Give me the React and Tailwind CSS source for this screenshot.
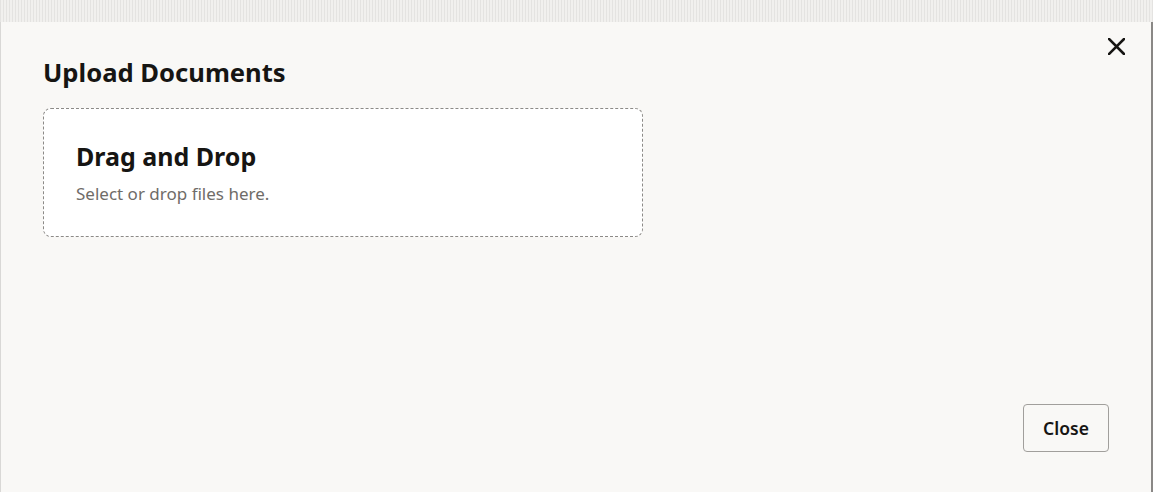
const Backdrop = () => (
  <div className="h-[22px] w-full bg-[#ebeae8] bg-[repeating-linear-gradient(90deg,#e4e3e1_0px,#e4e3e1_1px,#f1f0ee_1px,#f1f0ee_3px)]" />
);

const App = () => {
  return (
    <div className="flex h-[492px] w-[1153px] flex-col overflow-hidden bg-[#ebeae8] font-['Noto_Sans',sans-serif]">
      <Backdrop />
      <div className="relative flex flex-1 flex-col border-l border-r-2 border-l-[#d9d8d6] border-r-[#8a8886] bg-[#f9f8f6] pl-[42px] pr-[42px]">
        <button
          className="absolute right-[26px] top-[16px] flex h-[17px] w-[17px] items-center justify-center text-[#161513]"
          aria-label="Close dialog"
        >
          <svg viewBox="0 0 17 17" className="h-[17px] w-[17px]" fill="none" stroke="currentColor" strokeWidth="2.6" strokeLinecap="square">
            <path d="M1 1L16 16M16 1L1 16" />
          </svg>
        </button>

        <h1 className="mt-[35px] text-[25.6px] font-bold leading-[32px] text-[#161513]">Upload Documents</h1>

        <div className="mt-[19px] flex h-[129px] w-[600px] flex-col rounded-lg border border-dashed border-[#8c8a87] bg-white px-[32px] pt-[30px]">
          <div className="text-[25px] font-bold leading-[34px] text-[#161513]">Drag and Drop</div>
          <div className="mt-[10px] text-[17px] leading-[22px] text-[#6f6c68]">Select or drop files here.</div>
        </div>

        <div className="mt-auto mb-[40px] flex justify-end">
          <button className="h-[48px] w-[86px] rounded-[4px] border border-[#a19f9c] bg-[#f9f8f6] text-[17.5px] font-semibold text-[#161513]">
            Close
          </button>
        </div>
      </div>
    </div>
  );
};

export default App;
